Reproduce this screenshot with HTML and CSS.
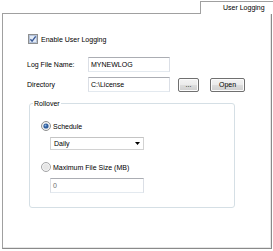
FILE: index.html
```html
<!DOCTYPE html>
<html>
<head>
<meta charset="utf-8">
<title>User Logging</title>
<link rel="stylesheet" href="styles.css">
</head>
<body>
<div class="window">
  <div class="tabstrip">
    <div class="tabline"></div>
    <div class="tab">User Logging</div>
  </div>
  <div class="panel">
    <div class="check-row">
      <svg class="checkbox" width="10" height="10" viewBox="0 0 10 10">
        <rect x="0.5" y="0.5" width="9" height="9" fill="#fff" stroke="#8e8f8f"/>
        <rect x="1.5" y="1.5" width="7" height="7" fill="#e4ecf7" stroke="#b5c3d9"/>
        <path d="M2.4 5.2 L4.1 7.2 L7.7 2.3" fill="none" stroke="#3b5a97" stroke-width="1.4"/>
      </svg>
      <span>Enable User Logging</span>
    </div>
    <div class="form">
      <div class="form-row">
        <span class="label">Log File Name:</span>
        <span class="textbox">MYNEWLOG</span>
      </div>
      <div class="form-row">
        <span class="label">Directory</span>
        <span class="textbox">C:\License</span>
        <span class="btn btn-browse">...</span>
        <span class="btn btn-open">Open</span>
      </div>
    </div>
    <fieldset class="group">
      <legend>Rollover</legend>
      <div class="radio-row">
        <svg class="radio" width="10" height="10" viewBox="0 0 10 10">
          <circle cx="5" cy="5" r="4.5" fill="#f2f2f2" stroke="#8e8f8f"/>
          <circle cx="5" cy="5" r="2.6" fill="#2f5f9e"/>
          <circle cx="4.5" cy="4.4" r="1" fill="#8fb4e0"/>
        </svg>
        <span>Schedule</span>
      </div>
      <div class="select">
        <span>Daily</span>
        <svg class="arrow" width="5" height="3" viewBox="0 0 5 3"><path d="M0 0 H5 L2.5 3 Z" fill="#000"/></svg>
      </div>
      <div class="radio-row">
        <svg class="radio" width="10" height="10" viewBox="0 0 10 10">
          <circle cx="5" cy="5" r="4.5" fill="#f4f4f4" stroke="#a3a4a6"/>
          <circle cx="5" cy="5" r="3" fill="#e6e6e6"/>
        </svg>
        <span>Maximum File Size (MB)</span>
      </div>
      <div class="textbox wide">0</div>
    </fieldset>
  </div>
</div>
</body>
</html>
```

FILE: styles.css
```css
* { box-sizing: border-box; }
html, body { margin: 0; padding: 0; background: #fff; }
body {
  width: 273px;
  height: 251px;
  overflow: hidden;
  font-family: "Liberation Sans", Arial, sans-serif;
  font-size: 7px;
  color: #000;
}
.tabstrip { display: flex; height: 14px; }
.tabline {
  flex: 1;
  margin-left: 2px;
  border-bottom: 1px solid #a0a0a0;
}
.tab {
  flex: none;
  width: 73px;
  margin-top: 1px;
  border-top: 1px solid #a0a0a0;
  border-left: 1px solid #a0a0a0;
  background: #fff;
  padding-left: 22px;
  line-height: 11px;
  white-space: nowrap;
}
.panel {
  margin-left: 2px;
  width: 270px;
  height: 235px;
  border: 1px solid #a0a0a0;
  border-top: none;
  border-right-color: #8a8a8a;
  border-bottom-color: #8a8a8a;
  box-shadow: inset -1px -1px 0 #e6e6e6;
  padding-left: 24px;
  display: flex;
  flex-direction: column;
  align-items: flex-start;
}
.check-row {
  display: flex;
  align-items: center;
  height: 10px;
  margin-top: 20px;
  margin-left: 1px;
  gap: 3px;
}
.checkbox, .radio { display: block; flex: none; }
.form {
  margin-top: 13px;
  display: flex;
  flex-direction: column;
  gap: 5px;
}
.form-row {
  display: flex;
  align-items: center;
  height: 15px;
}
.label { width: 61px; flex: none; }
.textbox {
  display: flex;
  align-items: center;
  width: 82px;
  height: 15px;
  padding-left: 2px;
  background: #fff;
  border: 1px solid #dbdfe6;
  border-top-color: #abadb3;
  border-bottom-color: #e3e9ef;
}
.btn {
  display: flex;
  align-items: center;
  justify-content: center;
  height: 14px;
  border: 1px solid #707070;
  border-radius: 2px;
  background: linear-gradient(#f3f3f3 0%, #ebebeb 50%, #dddddd 51%, #cfcfcf 100%);
  box-shadow: inset 0 0 0 1px #fcfcfc;
}
.btn-browse { width: 21px; margin-left: 8px; }
.btn-open { width: 35px; margin-left: 11px; }
.group {
  margin: 7px 0 0 2px;
  width: 206px;
  height: 109px;
  padding: 0 0 0 3px;
  border: 1px solid #d5dfe5;
  border-radius: 3px;
  display: flex;
  flex-direction: column;
  align-items: flex-start;
}
.group legend {
  padding: 0 1px;
  line-height: 9px;
}
.radio-row {
  display: flex;
  align-items: center;
  gap: 2px;
  height: 10px;
  margin-left: 8px;
  margin-top: 13px;
}
.radio-row + .select + .radio-row { margin-top: 12px; }
.select {
  display: flex;
  align-items: center;
  justify-content: space-between;
  width: 94px;
  height: 13px;
  margin-top: 6px;
  margin-left: 17px;
  padding: 0 3px 0 3px;
  border: 1px solid #d2d2d2;
  border-top-color: #c4c4c4;
  background: #fff;
}
.arrow { display: block; }
.textbox.wide {
  width: 94px;
  margin-top: 6px;
  margin-left: 17px;
  color: #6d6d6d;
}
```
